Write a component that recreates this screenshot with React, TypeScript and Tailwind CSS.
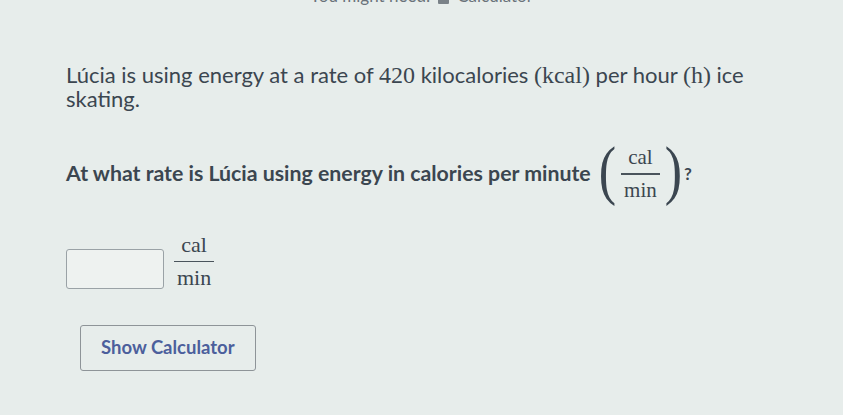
import React from "react";

const M = "font-['Liberation_Serif',serif]";

function Frac({ top, bottom, size = "text-[21px]" }: { top: string; bottom: string; size?: string }) {
  return (
    <span className={`inline-flex flex-col items-center align-middle ${M} ${size} leading-none`}>
      <span className="px-[3px] pb-[5px]">{top}</span>
      <span className="w-full h-[1.5px] bg-[#4a545c]" />
      <span className="px-[3px] pt-[5px]">{bottom}</span>
    </span>
  );
}

export default function App() {
  return (
    <div className="w-[843px] h-[415px] overflow-hidden bg-[#e7edeb] text-[#3b4650] font-['Lato','Liberation_Sans',sans-serif]">
      <div className="flex justify-center mt-[-12px] text-[17px] leading-[16px] text-[#6a737a]">
        <span className="flex items-center gap-[8px]">
          You might need:
          <span className="inline-block w-[11px] h-[15px] bg-[#7a8288] rounded-[1px]" />
          Calculator
        </span>
      </div>
      <div className="pl-[66px] pt-[59px]">
        <p className="text-[22px] leading-[24px] w-[730px]">
          Lúcia is using energy at a rate of <span className={`${M} text-[24px] leading-none`}>420</span> kilocalories{" "}
          <span className={`${M} text-[24px] leading-none`}>(kcal)</span> per hour{" "}
          <span className={`${M} text-[24px] leading-none`}>(h)</span> ice skating.
        </p>
        <div className="mt-[36px] flex items-center font-bold text-[21.3px]">
          <span>At what rate is Lúcia using energy in calories per minute</span>
          <span className="ml-[8px] flex items-center">
            <span className={`${M} text-[52px] font-normal leading-none scale-y-[1.25] mt-[-6px]`}>(</span>
            <span className="mx-[5px] font-normal"><Frac top="cal" bottom="min" /></span>
            <span className={`${M} text-[52px] font-normal leading-none scale-y-[1.25] mt-[-6px]`}>)</span>
          </span>
          <span className="ml-[2px] text-[17px]">?</span>
        </div>
        <div className="mt-[33px] flex items-end gap-[10px]">
          <div className="w-[98px] h-[40px] border-[1.5px] border-[#9aa2a6] rounded-[3px] bg-[#eef2f0] mb-[1px]" />
          <span className="mb-[1px]"><Frac top="cal" bottom="min" size="text-[22px]" /></span>
        </div>
        <button className="mt-[35px] ml-[14px] w-[176px] h-[46px] border-[1.5px] border-[#8e9498] rounded-[3px] text-[18.5px] font-bold text-[#4c5f9c] flex items-center pl-[20px]">
          Show Calculator
        </button>
      </div>
    </div>
  );
}
